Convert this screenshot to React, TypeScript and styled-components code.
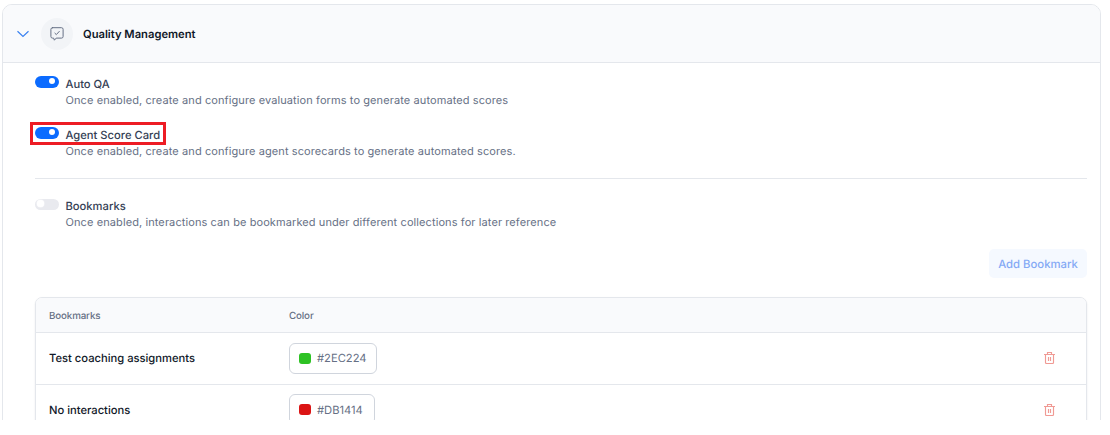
import React from "react";
import styled, { createGlobalStyle } from "styled-components";

const GlobalStyle = createGlobalStyle`
  * { box-sizing: border-box; }
  body { margin: 0; background: #fff; font-family: Inter, "Liberation Sans", sans-serif; text-rendering: geometricPrecision; }
`;

const Viewport = styled.main`
  height: 420px;
  overflow: hidden;
  padding: 4px 9px 0 2px;
`;

const Panel = styled.section`
  height: 500px;
  border: 1px solid #e4e7ec;
  border-radius: 10px;
  overflow: hidden;
`;

const PanelHeader = styled.header`
  display: flex;
  align-items: center;
  height: 58px;
  padding-left: 14px;
  background: #f9fafc;
  border-bottom: 1px solid #e4e7ec;
`;

const Badge = styled.span`
  display: flex;
  align-items: center;
  justify-content: center;
  width: 32px;
  height: 32px;
  margin: 0 10px 0 12px;
  border-radius: 50%;
  background: #f2f4f7;
`;

const Title = styled.h1`
  margin: 0;
  font-size: 11.2px;
  line-height: 16px;
  font-weight: 600;
  color: #101828;
`;

const PanelBody = styled.div`
  padding: 13px 13px 0 32px;
`;

const SettingRow = styled.div`
  display: flex;
  align-items: flex-start;
  height: 51px;
`;

const Toggle = styled.span<{ $on?: boolean }>`
  display: flex;
  align-items: flex-start;
  justify-content: ${(p) => (p.$on ? "flex-end" : "flex-start")};
  width: 24px;
  height: ${(p) => (p.$on ? 12 : 11)}px;
  padding: ${(p) => (p.$on ? "2px 4px" : "1px 2px")};
  margin-right: 6.5px;
  border-radius: 6px;
  background: ${(p) => (p.$on ? "#0b6bff" : "#e9eaef")};
`;

const Knob = styled.span<{ $on?: boolean }>`
  width: ${(p) => (p.$on ? 6 : 7)}px;
  height: ${(p) => (p.$on ? 6 : 7)}px;
  border-radius: 50%;
  background: #fff;
  box-shadow: ${(p) => (p.$on ? "none" : "0 0 0 0.5px #f8f8fa")};
`;

const SettingText = styled.div<{ $on?: boolean }>`
  position: relative;
  margin-top: ${(p) => (p.$on ? 0 : -1)}px;
`;

const Label = styled.div`
  font-size: 11.2px;
  line-height: 16px;
  font-weight: 500;
  color: #344054;
`;

const Description = styled.div`
  font-size: 11px;
  line-height: 16px;
  color: #667085;
  letter-spacing: 0.095px;
`;

const Highlight = styled.span`
  position: absolute;
  left: -35.5px;
  top: -5px;
  width: 136px;
  height: 23px;
  border: 3px solid #ed1c24;
`;

const Divider = styled.hr`
  height: 1px;
  margin: 0 0 20px;
  border: 0;
  background: #e4e7ec;
`;

const Actions = styled.div`
  display: flex;
  justify-content: flex-end;
  margin: -1px 0 19px;
`;

const AddButton = styled.button`
  width: 98px;
  height: 29px;
  padding: 0;
  border: 0;
  border-radius: 5px;
  background: #f5f9ff;
  color: #84a9f5;
  font: 500 11.3px/16px Inter, sans-serif;
  text-rendering: inherit;
`;

const Table = styled.div`
  border: 1px solid #e4e7ec;
  border-radius: 7px;
  box-shadow: 0 1px 2px rgba(16, 24, 40, 0.1);
  overflow: hidden;
`;

const TableRow = styled.div<{ $head?: boolean }>`
  display: grid;
  grid-template-columns: 240px 1fr 42px;
  align-items: center;
  height: ${(p) => (p.$head ? 35 : 51.7)}px;
  padding: ${(p) => (p.$head ? "3px 0 0 13px" : "0 0 0.4px 13px")};
  border-bottom: 1px solid #e4e7ec;
  background: ${(p) => (p.$head ? "#f9fafc" : "#fff")};
`;

const HeadCell = styled.span`
  font-size: 9.8px;
  line-height: 14px;
  font-weight: 500;
  color: #667085;
  letter-spacing: -0.15px;
`;

const NameCell = styled.span`
  font-size: 11.2px;
  line-height: 16px;
  font-weight: 500;
  color: #101828;
`;

const ColorChip = styled.span<{ $width: number }>`
  display: flex;
  align-items: center;
  gap: 6px;
  width: ${(p) => p.$width}px;
  height: 31px;
  padding-left: 9px;
  border: 1px solid #d0d5dd;
  border-radius: 6px;
  font-size: 11.2px;
  line-height: 16px;
  color: #667085;
`;

const Swatch = styled.span<{ $color: string }>`
  width: 12px;
  height: 11px;
  border-radius: 3px;
  background: ${(p) => p.$color};
`;

const bookmarks = [
  { name: "Test coaching assignments", color: "#2EC224", width: 88 },
  { name: "No interactions", color: "#DB1414", width: 86 },
];

const ChevronIcon = () => (
  <svg width="12" height="8" viewBox="0 0 12 8" fill="none" stroke="#3b82f0" strokeWidth="1.2">
    <path d="M0.5 1.2 6 6.5 11.5 1.2" />
  </svg>
);

const MessageCheckIcon = () => (
  <svg width="14" height="14" viewBox="0 0 14 14" fill="none" stroke="#667085" strokeWidth="1" strokeLinecap="round" strokeLinejoin="round">
    <path d="M2.5 .7h9A1.6 1.6 0 0 1 13.1 2.3v7.2a1.6 1.6 0 0 1-1.6 1.6H6.2L4.4 13.2 3.6 11.1H2.5A1.6 1.6 0 0 1 .9 9.5V2.3A1.6 1.6 0 0 1 2.5.7Z" />
    <path d="m4.9 6.2 1.4 1.4 3-3.2" />
  </svg>
);

const TrashIcon = () => (
  <svg width="11" height="12" viewBox="0 0 11 12" fill="none" stroke="#f09a94" strokeWidth="1.15">
    <path d="M0 2.5h11M3.5 2.5v-2h4v2M1.5 2.5v8q0 1 1 1h6q1 0 1-1v-8M4.5 5v4M6.5 5v4" />
  </svg>
);

interface SettingProps {
  label: string;
  text: string;
  on?: boolean;
  highlighted?: boolean;
}

const Setting = ({ label, text, on, highlighted }: SettingProps) => (
  <SettingRow>
    <Toggle $on={on}>
      <Knob $on={on} />
    </Toggle>
    <SettingText $on={on}>
      <Label>{label}</Label>
      <Description>{text}</Description>
      {highlighted && <Highlight />}
    </SettingText>
  </SettingRow>
);

export default function App() {
  return (
    <Viewport>
      <GlobalStyle />
      <Panel>
        <PanelHeader>
          <ChevronIcon />
          <Badge>
            <MessageCheckIcon />
          </Badge>
          <Title>Quality Management</Title>
        </PanelHeader>
        <PanelBody>
          <Setting on label="Auto QA" text="Once enabled, create and configure evaluation forms to generate automated scores" />
          <Setting on highlighted label="Agent Score Card" text="Once enabled, create and configure agent scorecards to generate automated scores." />
          <Divider />
          <Setting label="Bookmarks" text="Once enabled, interactions can be bookmarked under different collections for later reference" />
          <Actions>
            <AddButton>Add Bookmark</AddButton>
          </Actions>
          <Table>
            <TableRow $head>
              <HeadCell>Bookmarks</HeadCell>
              <HeadCell>Color</HeadCell>
            </TableRow>
            {bookmarks.map((b) => (
              <TableRow key={b.name}>
                <NameCell>{b.name}</NameCell>
                <ColorChip $width={b.width}>
                  <Swatch $color={b.color} />
                  {b.color}
                </ColorChip>
                <TrashIcon />
              </TableRow>
            ))}
          </Table>
        </PanelBody>
      </Panel>
    </Viewport>
  );
}
